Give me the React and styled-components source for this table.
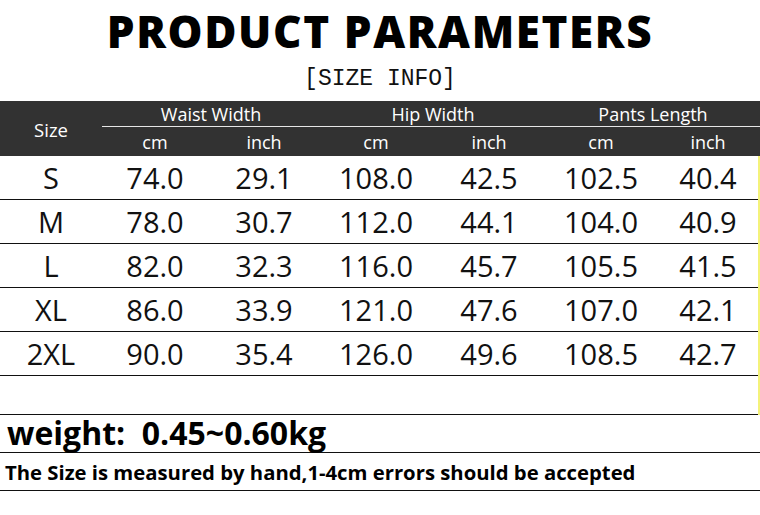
import styled, { createGlobalStyle } from "styled-components"

const GlobalStyle = createGlobalStyle`
  html, body {
    margin: 0;
    padding: 0;
    background: #fff;
  }
  body {
    width: 760px;
    height: 515px;
    overflow: hidden;
    font-family: "Open Sans", "Noto Sans", sans-serif;
    color: #111;
  }
`

const sizes = [
  ["S", "74.0", "29.1", "108.0", "42.5", "102.5", "40.4"],
  ["M", "78.0", "30.7", "112.0", "44.1", "104.0", "40.9"],
  ["L", "82.0", "32.3", "116.0", "45.7", "105.5", "41.5"],
  ["XL", "86.0", "33.9", "121.0", "47.6", "107.0", "42.1"],
  ["2XL", "90.0", "35.4", "126.0", "49.6", "108.5", "42.7"],
]

const groups = ["Waist Width", "Hip Width", "Pants Length"]

const columns = "102px 106px 112px 112px 114px 110px 104px"

export default function App() {
  return (
    <Page>
      <GlobalStyle />
      <Title>PRODUCT PARAMETERS</Title>
      <Subtitle>[SIZE INFO]</Subtitle>
      <Header>
        <SizeHead>Size</SizeHead>
        {groups.map((g) => (
          <GroupHead key={g}>{g}</GroupHead>
        ))}
        {groups.flatMap((g) => [
          <UnitHead key={g + "cm"}>cm</UnitHead>,
          <UnitHead key={g + "in"}>inch</UnitHead>,
        ])}
      </Header>
      <Body>
        {sizes.map((row) => (
          <Row key={row[0]}>
            {row.map((cell, i) => (
              <Cell key={i}>{cell}</Cell>
            ))}
          </Row>
        ))}
        <EmptyRow />
      </Body>
      <Weight>weight:&nbsp; 0.45~0.60kg</Weight>
      <Note>The Size is measured by hand,1-4cm errors should be accepted</Note>
    </Page>
  )
}

const Page = styled.div`
  width: 760px;
  display: flex;
  flex-direction: column;
`
const Title = styled.h1`
  margin: 0;
  padding-top: 2px;
  height: 58px;
  text-align: center;
  font-family: "Open Sans", sans-serif;
  font-weight: 800;
  font-size: 44px;
  line-height: 58px;
  letter-spacing: 1.6px;
  color: #000;
`
const Subtitle = styled.div`
  height: 41px;
  text-align: center;
  font-family: "Liberation Mono", monospace;
  font-size: 23px;
  line-height: 38px;
  color: #111;
`
const Header = styled.div`
  display: grid;
  grid-template-columns: ${columns};
  grid-template-rows: 26px 28px;
  background: #323232;
  color: #fff;
  height: 55px;
`
const SizeHead = styled.div`
  grid-row: 1 / span 2;
  display: flex;
  align-items: center;
  justify-content: center;
  font-size: 18.5px;
  font-weight: 500;
  padding-top: 2px;
`
const GroupHead = styled.div`
  grid-column: span 2;
  display: flex;
  align-items: center;
  justify-content: center;
  font-size: 18px;
  font-weight: 500;
  border-bottom: 1px solid #e6e6e6;
`
const UnitHead = styled.div`
  display: flex;
  align-items: center;
  justify-content: center;
  font-size: 18px;
  font-weight: 500;
  padding-top: 1px;
`
const Body = styled.div`
  border-right: 2px solid #f4f27a;
`
const Row = styled.div`
  display: grid;
  grid-template-columns: ${columns};
  height: 43px;
  border-bottom: 1px solid #111;
`
const Cell = styled.div`
  display: flex;
  align-items: center;
  justify-content: center;
  font-size: 29px;
  color: #111;
`
const EmptyRow = styled.div`
  height: 38px;
  border-bottom: 1px solid #111;
`
const Weight = styled.div`
  height: 37px;
  border-bottom: 1px solid #111;
  padding-left: 7px;
  font-weight: 700;
  font-size: 32px;
  line-height: 36px;
  color: #000;
`
const Note = styled.div`
  height: 37px;
  border-bottom: 1px solid #111;
  padding-left: 5px;
  font-weight: 700;
  font-size: 20.3px;
  line-height: 38px;
  color: #000;
`
